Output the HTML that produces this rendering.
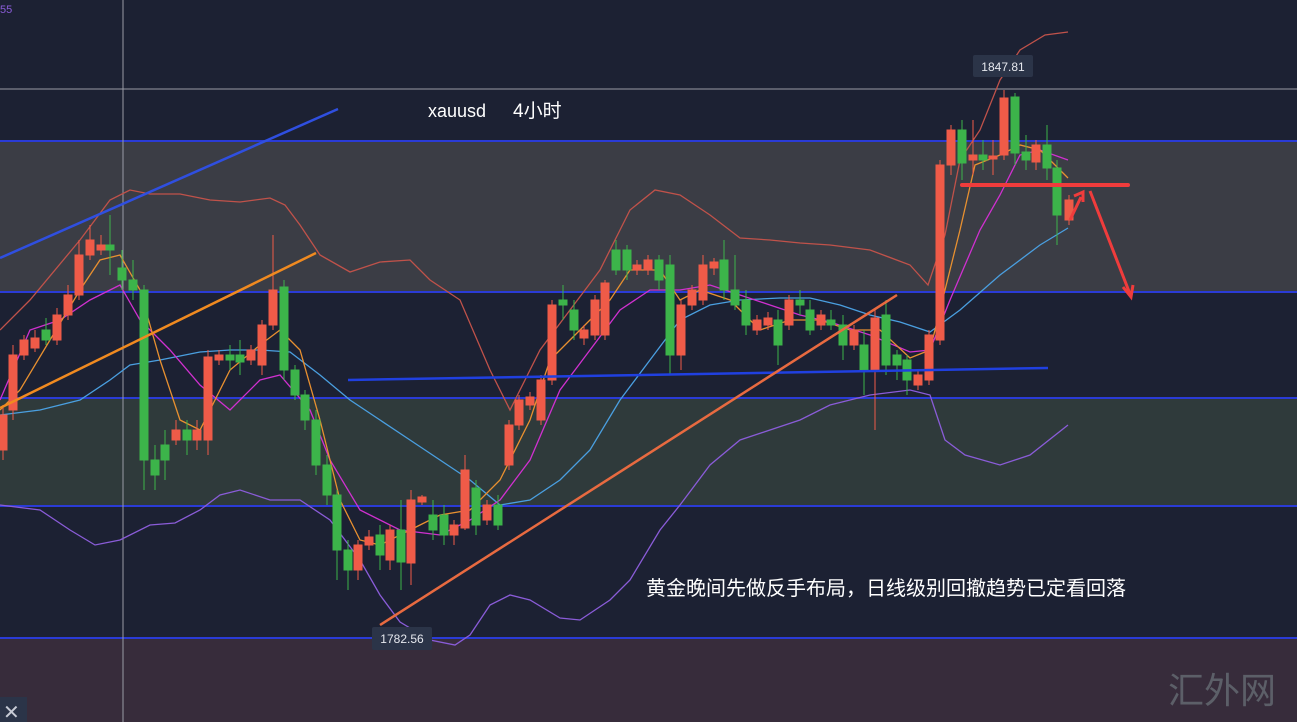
<!DOCTYPE html><html><head><meta charset="utf-8"><style>
html,body{margin:0;padding:0;background:#1c2133;overflow:hidden}
svg{display:block}
text{font-family:"Liberation Sans","Noto Sans CJK SC",sans-serif}
</style></head><body>
<svg width="1297" height="722" xmlns="http://www.w3.org/2000/svg">
<rect width="1297" height="722" fill="#1c2133"/>
<rect y="141" width="1297" height="151" fill="#3b3d45"/>
<rect y="398" width="1297" height="108" fill="#2f3a3b"/>
<rect y="638" width="1297" height="84" fill="#372c3b"/>
<g stroke="#2a3bd6" stroke-width="2">
<line x1="0" y1="141" x2="1297" y2="141"/><line x1="0" y1="292" x2="1297" y2="292"/><line x1="0" y1="398" x2="1297" y2="398"/><line x1="0" y1="506" x2="1297" y2="506"/><line x1="0" y1="638" x2="1297" y2="638"/></g>
<line x1="123" y1="0" x2="123" y2="722" stroke="#9a9ca6" stroke-width="1"/>
<line x1="0" y1="89" x2="1297" y2="89" stroke="#9a9ca6" stroke-width="1"/>
<text x="0" y="13" fill="#8a5cd8" font-size="11">55</text>
<g fill="none" stroke-width="1.3">
<polyline stroke="#c0524a" points="0,330 30,300 80,240 110,200 130,190 150,194 180,194 210,200 240,202 270,198 285,205 300,225 320,255 350,272 380,262 410,260 430,280 460,300 490,370 510,410 540,350 570,310 600,270 630,210 655,190 680,195 710,215 740,238 770,240 800,243 830,245 870,250 910,265 928,285 945,235 960,160 980,130 1000,80 1020,50 1045,35 1068,32"/>
<polyline stroke="#8a5cd8" points="0,505 40,510 70,530 95,545 120,540 150,525 175,523 200,510 220,495 240,490 270,500 300,500 330,520 360,560 380,595 400,622 430,640 455,645 470,635 490,605 510,595 530,600 560,618 580,620 610,600 630,580 660,530 680,505 710,465 740,440 770,430 800,420 830,405 870,395 910,390 930,395 945,440 965,455 1000,465 1030,455 1068,425"/>
<polyline stroke="#4a9fe0" points="0,415 40,410 80,400 110,380 130,365 160,360 200,352 230,350 260,350 290,352 320,375 350,400 380,420 410,440 440,460 470,480 500,505 530,500 560,480 590,450 620,400 650,360 680,320 710,305 740,300 780,298 810,298 840,305 870,315 900,322 930,332 960,310 1000,275 1040,245 1068,228"/>
<polyline stroke="#d030d0" points="0,400 30,330 60,320 90,300 120,285 140,320 170,350 200,385 230,410 260,380 280,375 310,410 330,460 360,510 400,530 440,535 470,520 500,500 530,460 560,390 590,350 620,310 650,290 680,290 710,285 740,295 770,305 800,315 830,322 870,335 910,352 930,350 950,300 980,230 1000,195 1020,155 1040,150 1068,160"/>
<polyline stroke="#e89030" points="0,410 20,390 50,340 80,290 100,260 120,255 140,290 160,360 180,420 200,430 230,370 260,345 280,330 300,350 320,420 340,500 360,540 380,545 410,530 440,515 470,510 500,480 530,420 550,360 580,330 610,300 630,270 660,270 680,300 700,290 730,300 760,330 790,320 820,320 850,330 880,330 910,358 930,350 945,290 960,230 975,165 1000,155 1020,145 1040,150 1068,178"/>
</g>
<g id="c">
<g fill="#ef5b48" stroke="#ef5b48">
<path d="M3 405V460M13 345V420M24 335V360M35 330V352M57 308V345M68 285V320M79 240V300M90 225V260M101 235V255M176 420V445M197 420V450M208 350V455M219 350V365M251 345V365M262 320V375M273 235V330M358 540V580M369 530V550M390 525V570M411 490V585M422 495V505M454 520V545M465 455V530M487 500V525M509 420V470M519 395V430M530 392V410M541 375V425M552 300V385M584 325V345M595 295V340M605 280V340M637 260V275M648 255V275M681 300V370M692 285V310M703 255V305M714 258V275M757 315V335M768 312V330M789 295V330M821 310V330M854 325V350M875 310V430M918 370V390M929 330V385M940 160V345M951 125V175M973 120V175M993 140V175M1004 90V160M1036 140V170M1069 195V225" stroke-width="1" fill="none"/>
<rect x="-1" y="415" width="8" height="35"/><rect x="9" y="355" width="8" height="55"/><rect x="20" y="340" width="8" height="15"/><rect x="31" y="338" width="8" height="10"/><rect x="53" y="315" width="8" height="25"/><rect x="64" y="295" width="8" height="20"/><rect x="75" y="255" width="8" height="40"/><rect x="86" y="240" width="8" height="15"/><rect x="97" y="245" width="8" height="5"/><rect x="172" y="430" width="8" height="10"/><rect x="193" y="430" width="8" height="10"/><rect x="204" y="357" width="8" height="83"/><rect x="215" y="355" width="8" height="5"/><rect x="247" y="350" width="8" height="10"/><rect x="258" y="325" width="8" height="40"/><rect x="269" y="290" width="8" height="35"/><rect x="354" y="545" width="8" height="25"/><rect x="365" y="537" width="8" height="8"/><rect x="386" y="530" width="8" height="30"/><rect x="407" y="500" width="8" height="63"/><rect x="418" y="497" width="8" height="5"/><rect x="450" y="525" width="8" height="10"/><rect x="461" y="470" width="8" height="58"/><rect x="483" y="505" width="8" height="15"/><rect x="505" y="425" width="8" height="40"/><rect x="515" y="400" width="8" height="25"/><rect x="526" y="397" width="8" height="8"/><rect x="537" y="380" width="8" height="40"/><rect x="548" y="305" width="8" height="75"/><rect x="580" y="330" width="8" height="8"/><rect x="591" y="300" width="8" height="35"/><rect x="601" y="283" width="8" height="52"/><rect x="633" y="265" width="8" height="5"/><rect x="644" y="260" width="8" height="10"/><rect x="677" y="305" width="8" height="50"/><rect x="688" y="290" width="8" height="15"/><rect x="699" y="265" width="8" height="35"/><rect x="710" y="262" width="8" height="6"/><rect x="753" y="320" width="8" height="10"/><rect x="764" y="318" width="8" height="7"/><rect x="785" y="300" width="8" height="25"/><rect x="817" y="315" width="8" height="10"/><rect x="850" y="330" width="8" height="15"/><rect x="871" y="318" width="8" height="52"/><rect x="914" y="375" width="8" height="10"/><rect x="925" y="335" width="8" height="45"/><rect x="936" y="165" width="8" height="175"/><rect x="947" y="130" width="8" height="35"/><rect x="969" y="155" width="8" height="5"/><rect x="989" y="156" width="8" height="3"/><rect x="1000" y="98" width="8" height="57"/><rect x="1032" y="145" width="8" height="17"/><rect x="1065" y="200" width="8" height="20"/>
</g>
<g fill="#3cb44a" stroke="#3cb44a">
<path d="M46 318V345M110 215V275M122 250V290M133 260V300M144 285V490M155 445V490M165 430V480M187 420V455M230 345V370M240 340V375M284 280V380M295 365V400M305 390V430M316 410V475M327 455V505M337 490V580M348 540V590M380 525V570M401 500V590M433 500V540M444 505V545M476 480V535M498 495V530M563 285V320M574 300V340M616 240V275M627 245V280M659 255V290M670 255V375M724 240V300M735 255V310M746 290V335M778 310V365M800 290V315M810 300V335M831 310V330M843 315V360M864 330V395M886 300V375M897 350V380M907 355V395M962 120V180M983 140V170M1015 93V165M1026 135V170M1047 125V180M1057 160V245" stroke-width="1" fill="none"/>
<rect x="42" y="330" width="8" height="10"/><rect x="106" y="245" width="8" height="5"/><rect x="118" y="268" width="8" height="12"/><rect x="129" y="280" width="8" height="10"/><rect x="140" y="290" width="8" height="170"/><rect x="151" y="460" width="8" height="15"/><rect x="161" y="445" width="8" height="15"/><rect x="183" y="430" width="8" height="10"/><rect x="226" y="355" width="8" height="5"/><rect x="236" y="355" width="8" height="7"/><rect x="280" y="287" width="8" height="83"/><rect x="291" y="370" width="8" height="25"/><rect x="301" y="395" width="8" height="25"/><rect x="312" y="420" width="8" height="45"/><rect x="323" y="465" width="8" height="30"/><rect x="333" y="495" width="8" height="55"/><rect x="344" y="550" width="8" height="20"/><rect x="376" y="535" width="8" height="20"/><rect x="397" y="530" width="8" height="32"/><rect x="429" y="515" width="8" height="15"/><rect x="440" y="515" width="8" height="20"/><rect x="472" y="488" width="8" height="37"/><rect x="494" y="505" width="8" height="20"/><rect x="559" y="300" width="8" height="5"/><rect x="570" y="310" width="8" height="20"/><rect x="612" y="250" width="8" height="20"/><rect x="623" y="250" width="8" height="20"/><rect x="655" y="260" width="8" height="20"/><rect x="666" y="265" width="8" height="90"/><rect x="720" y="260" width="8" height="30"/><rect x="731" y="290" width="8" height="15"/><rect x="742" y="300" width="8" height="25"/><rect x="774" y="320" width="8" height="25"/><rect x="796" y="300" width="8" height="5"/><rect x="806" y="310" width="8" height="20"/><rect x="827" y="320" width="8" height="5"/><rect x="839" y="325" width="8" height="20"/><rect x="860" y="345" width="8" height="25"/><rect x="882" y="315" width="8" height="50"/><rect x="893" y="355" width="8" height="10"/><rect x="903" y="360" width="8" height="20"/><rect x="958" y="130" width="8" height="33"/><rect x="979" y="155" width="8" height="5"/><rect x="1011" y="97" width="8" height="56"/><rect x="1022" y="152" width="8" height="8"/><rect x="1043" y="145" width="8" height="23"/><rect x="1053" y="168" width="8" height="47"/>
</g>
</g>
<line x1="0" y1="258" x2="338" y2="109" stroke="#2f4fe0" stroke-width="2.5"/>
<line x1="0" y1="408" x2="316" y2="253" stroke="#f08a20" stroke-width="2.5"/>
<line x1="348" y1="380" x2="1048" y2="368" stroke="#2040e0" stroke-width="2.5"/>
<line x1="380" y1="625" x2="897" y2="295" stroke="#e86a40" stroke-width="2.5"/>
<line x1="962" y1="185" x2="1128" y2="185" stroke="#f03c3c" stroke-width="4" stroke-linecap="round"/>
<g stroke="#f03c3c" stroke-width="3" fill="none">
<line x1="1070" y1="220" x2="1081" y2="197"/><polyline points="1074,196 1083,192 1083,202"/>
<line x1="1090" y1="191" x2="1130" y2="294"/><polyline points="1123,287 1131,297 1133,285"/>
</g>
<rect x="973" y="55" width="60" height="22" rx="2" fill="#2b3448"/>
<text x="1003" y="71" fill="#e6e8ee" font-size="12" text-anchor="middle">1847.81</text>
<rect x="372" y="627" width="60" height="23" rx="2" fill="#2b3448"/>
<text x="402" y="643" fill="#e6e8ee" font-size="12" text-anchor="middle">1782.56</text>
<text x="428" y="117" fill="#ffffff" font-size="18">xauusd</text>
<text x="513" y="117" fill="#ffffff" font-size="19">4小时</text>
<text x="646" y="595" fill="#ffffff" font-size="20">黄金晚间先做反手布局，日线级别回撤趋势已定看回落</text>
<text x="1168" y="703" fill="#5c5f68" font-size="36" font-family="Liberation Serif,Noto Serif CJK SC,serif">汇外网</text>
<rect x="0" y="697" width="27" height="25" fill="#2b3448"/>
<text x="3" y="719" fill="#c8ccd6" font-size="20">✕</text>
</svg>
</body></html>
